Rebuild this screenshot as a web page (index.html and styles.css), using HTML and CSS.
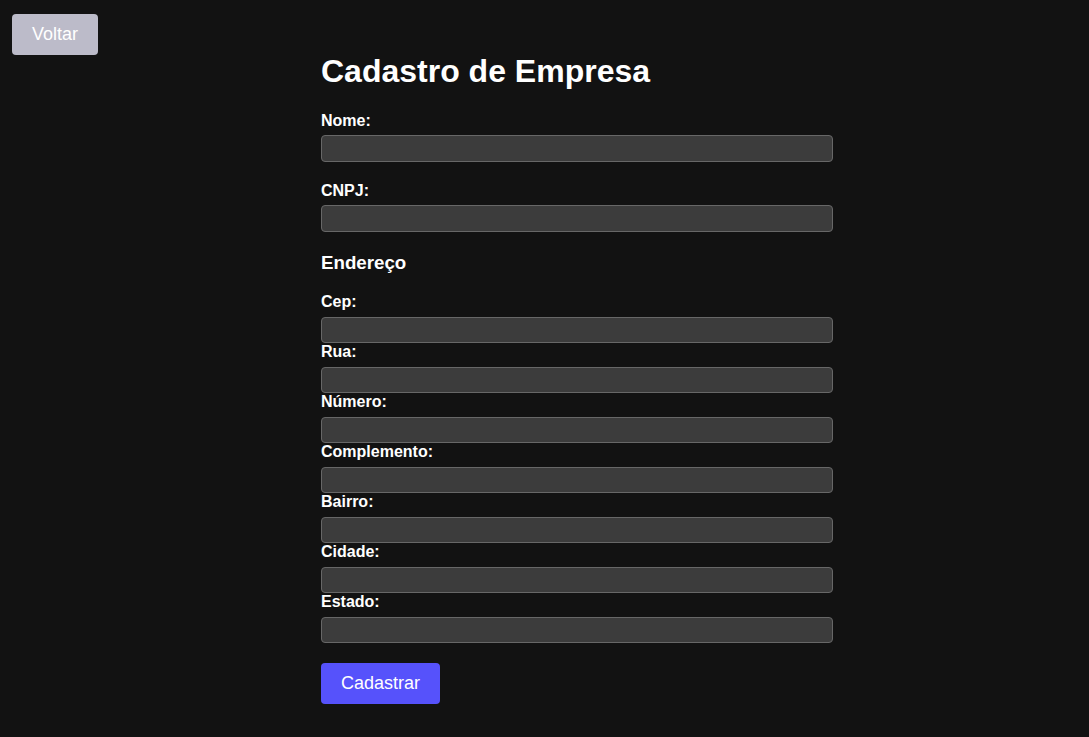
FILE: index.html
```html
<!DOCTYPE html>
<html lang="pt-BR">
<head>
<meta charset="utf-8">
<title>Cadastro de Empresa</title>
<link rel="stylesheet" href="styles.css">
</head>
<body>
<div class="page">
  <button class="btn btn-back" type="button">Voltar</button>
  <form class="form">
    <h1 class="title">Cadastro de Empresa</h1>
    <div class="group">
      <label class="label" for="nome">Nome:</label>
      <input class="input" id="nome" type="text">
    </div>
    <div class="group">
      <label class="label" for="cnpj">CNPJ:</label>
      <input class="input" id="cnpj" type="text">
    </div>
    <h3 class="subtitle">Endereço</h3>
    <div class="address">
      <label class="label" for="cep">Cep:</label>
      <input class="input" id="cep" type="text">
      <label class="label" for="rua">Rua:</label>
      <input class="input" id="rua" type="text">
      <label class="label" for="numero">Número:</label>
      <input class="input" id="numero" type="text">
      <label class="label" for="complemento">Complemento:</label>
      <input class="input" id="complemento" type="text">
      <label class="label" for="bairro">Bairro:</label>
      <input class="input" id="bairro" type="text">
      <label class="label" for="cidade">Cidade:</label>
      <input class="input" id="cidade" type="text">
      <label class="label" for="estado">Estado:</label>
      <input class="input" id="estado" type="text">
    </div>
    <button class="btn btn-submit" type="submit">Cadastrar</button>
  </form>
</div>
</body>
</html>
```

FILE: styles.css
```css
html, body {
  margin: 0;
  padding: 0;
  background: #121212;
  color: #ffffff;
  font-family: "Liberation Sans", Arial, sans-serif;
}

.page {
  display: flex;
  align-items: flex-start;
  min-height: 737px;
}

.btn {
  border: 0;
  border-radius: 4px;
  color: #ffffff;
  font-family: "Liberation Sans", Arial, sans-serif;
  font-size: 18px;
  height: 41px;
  padding: 0;
  cursor: pointer;
}

.btn-back {
  margin: 14px 0 0 12px;
  width: 86px;
  background: #bcbbc9;
  flex: none;
}

.form {
  margin-left: 223px;
  width: 512px;
  padding-top: 53px;
  display: flex;
  flex-direction: column;
  align-items: flex-start;
}

.title {
  margin: 0 0 21.6px;
  font-size: 32px;
  line-height: 37px;
  font-weight: bold;
}

.group {
  width: 100%;
  margin-bottom: 20px;
}

.label {
  display: block;
  font-size: 16px;
  font-weight: bold;
  line-height: 18.4px;
  margin-bottom: 5px;
}

.input {
  display: block;
  box-sizing: border-box;
  width: 512px;
  height: 26.6px;
  margin: 0;
  padding: 0 6px;
  background: #3c3c3c;
  border: 1px solid #676767;
  border-radius: 4px;
  color: #ffffff;
  font-size: 14px;
  font-family: "Liberation Sans", Arial, sans-serif;
}

.subtitle {
  margin: 0 0 20.5px;
  font-size: 18.72px;
  line-height: 21px;
  font-weight: bold;
}

.address {
  width: 100%;
}

.btn-submit {
  margin-top: 20px;
  width: 119px;
  background: #5652fb;
}
```
